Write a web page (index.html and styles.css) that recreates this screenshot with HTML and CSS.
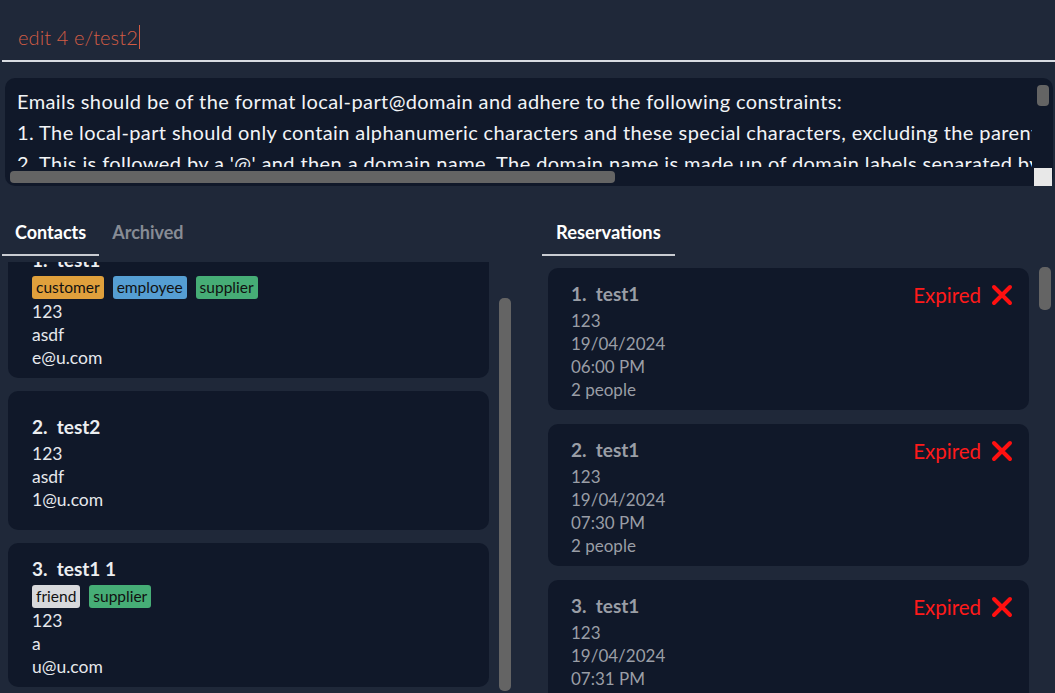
FILE: index.html
```html
<!DOCTYPE html>
<html>
<head>
<meta charset="utf-8">
<link rel="stylesheet" href="styles.css">
</head>
<body>
<div class="app">
  <div class="command">
    <span class="command-text">edit 4 e/test2</span><span class="caret"></span>
  </div>

  <div class="result">
    <div class="result-text">
      <div class="result-line">Emails should be of the format local-part@domain and adhere to the following constraints:</div>
      <div class="result-line">1. The local-part should only contain alphanumeric characters and these special characters, excluding the parentheses, (+_.-). The local-part may not start or end with any special characters.</div>
      <div class="result-line">2. This is followed by a '@' and then a domain name. The domain name is made up of domain labels separated by periods.</div>
    </div>
    <div class="result-hbar"><div class="hthumb"></div><div class="corner"></div></div>
    <div class="vthumb"></div>
  </div>

  <div class="panels">
    <section class="column left">
      <div class="tabs">
        <div class="tab active">Contacts</div>
        <div class="tab">Archived</div>
      </div>
      <div class="viewport">
        <div class="list contacts">
          <div class="card">
            <div class="title">1.&nbsp;&nbsp;test1</div>
            <div class="tags">
              <span class="tag orange">customer</span>
              <span class="tag blue">employee</span>
              <span class="tag green">supplier</span>
            </div>
            <div class="line">123</div>
            <div class="line">asdf</div>
            <div class="line">e@u.com</div>
          </div>
          <div class="card card-notags">
            <div class="title">2.&nbsp;&nbsp;test2</div>
            <div class="line">123</div>
            <div class="line">asdf</div>
            <div class="line">1@u.com</div>
          </div>
          <div class="card">
            <div class="title">3.&nbsp;&nbsp;test1 1</div>
            <div class="tags">
              <span class="tag grey">friend</span>
              <span class="tag green">supplier</span>
            </div>
            <div class="line">123</div>
            <div class="line">a</div>
            <div class="line">u@u.com</div>
          </div>
        </div>
        <div class="scroll left-scroll"><div class="thumb"></div></div>
      </div>
    </section>

    <section class="column right">
      <div class="tabs">
        <div class="tab active res-tab">Reservations</div>
      </div>
      <div class="viewport">
        <div class="list reservations">
          <div class="card rcard">
            <div class="rhead">
              <div class="title">1.&nbsp;&nbsp;test1</div>
              <div class="status">Expired <svg class="xicon" viewBox="0 0 22 22"><path d="M3 3 L19 19 M19 3 L3 19"/></svg></div>
            </div>
            <div class="line">123</div>
            <div class="line">19/04/2024</div>
            <div class="line">06:00 PM</div>
            <div class="line">2 people</div>
          </div>
          <div class="card rcard">
            <div class="rhead">
              <div class="title">2.&nbsp;&nbsp;test1</div>
              <div class="status">Expired <svg class="xicon" viewBox="0 0 22 22"><path d="M3 3 L19 19 M19 3 L3 19"/></svg></div>
            </div>
            <div class="line">123</div>
            <div class="line">19/04/2024</div>
            <div class="line">07:30 PM</div>
            <div class="line">2 people</div>
          </div>
          <div class="card rcard">
            <div class="rhead">
              <div class="title">3.&nbsp;&nbsp;test1</div>
              <div class="status">Expired <svg class="xicon" viewBox="0 0 22 22"><path d="M3 3 L19 19 M19 3 L3 19"/></svg></div>
            </div>
            <div class="line">123</div>
            <div class="line">19/04/2024</div>
            <div class="line">07:31 PM</div>
            <div class="line">2 people</div>
          </div>
        </div>
        <div class="scroll right-scroll"><div class="thumb"></div></div>
      </div>
    </section>
  </div>
</div>
</body>
</html>
```

FILE: styles.css
```css
* { box-sizing: border-box; }

html, body {
  margin: 0;
  padding: 0;
  background: #1f2839;
  width: 1055px;
  height: 693px;
  overflow: hidden;
  font-family: Lato, "Open Sans", sans-serif;
}

.app {
  display: flex;
  flex-direction: column;
  height: 693px;
}

/* command box */
.command {
  height: 62px;
  margin-left: 2px;
  border-bottom: 2px solid #d9dce2;
  padding-left: 16px;
  display: flex;
  align-items: center;
  padding-top: 14px;
}
.command-text {
  color: #d25c44;
  font-size: 20px;
  font-weight: 300;
  letter-spacing: 0.1px;
}
.caret {
  display: inline-block;
  width: 1px;
  height: 24px;
  background: #d25c44;
  margin-left: 1px;
}

/* result box */
.result {
  position: relative;
  margin: 16px 2px 0 5px;
  height: 108px;
  background: #101829;
  border-radius: 10px;
}
.result-text {
  height: 89px;
  overflow: hidden;
  padding: 8px 0 0 12px;
  margin-right: 21px;
}
.result-line {
  color: #f2f4f7;
  font-size: 20px;
  letter-spacing: 0.4px;
  line-height: 31px;
  white-space: nowrap;
  font-weight: 400;
}
.result-hbar {
  display: flex;
  align-items: center;
  height: 19px;
  padding-left: 5px;
}
.hthumb {
  width: 605px;
  height: 12px;
  background: #646464;
  border-radius: 4px;
}
.corner {
  margin-left: auto;
  margin-right: 1px;
  width: 18px;
  height: 18px;
  background: #e8e8e8;
}
.vthumb {
  position: absolute;
  right: 4px;
  top: 7px;
  width: 12px;
  height: 21px;
  background: #646464;
  border-radius: 4px;
}

/* panels */
.panels {
  flex: 1;
  display: grid;
  grid-template-columns: 530px 525px;
  min-height: 0;
}
.column {
  display: flex;
  flex-direction: column;
  min-height: 0;
}
.tabs {
  height: 76px;
  display: flex;
  align-items: flex-end;
  padding-bottom: 6px;
}
.left .tabs { padding-left: 2px; }
.right .tabs { padding-left: 12px; }
.tab {
  font-size: 18px;
  font-weight: 700;
  color: #878c95;
  padding: 0 13px 11px 13px;
  border-bottom: 2px solid transparent;
}
.tab.active {
  color: #ffffff;
  border-bottom-color: #c9ccd2;
}
.res-tab { padding: 0 14px 11px 14px; font-size: 18.3px; }

.viewport {
  flex: 1;
  display: flex;
  overflow: hidden;
  min-height: 0;
}
.list {
  width: 481px;
  display: flex;
  flex-direction: column;
  gap: 13px;
}
.contacts {
  margin-left: 8px;
  margin-top: -28px;
}
.reservations {
  margin-left: 18px;
  margin-top: 6px;
  gap: 14px;
}

.card {
  background: #101829;
  border-radius: 10px;
  padding: 15px 24px 9px 24px;
  flex-shrink: 0;
}
.card-notags {
  padding-top: 25px;
  padding-bottom: 19px;
}
.card-notags .title { margin-bottom: 4px; }

.title {
  font-size: 19px;
  font-weight: 700;
  line-height: 22px;
  color: #eceef1;
}
.line {
  font-size: 17.5px;
  line-height: 23px;
  color: #e6e8ec;
}

.tags {
  display: flex;
  gap: 9px;
  margin: 5px 0 1px 0;
}
.tag {
  height: 23px;
  line-height: 23px;
  font-size: 15.5px;
  padding: 0 4px;
  border-radius: 3px;
  color: #111;
}
.orange { background: #e0a03c; }
.blue { background: #559ed3; }
.green { background: #46ad76; }
.grey { background: #d8d9dc; }

/* reservation cards */
.rcard {
  padding: 15px 16px 9px 23px;
}
.rhead {
  display: flex;
  align-items: center;
  justify-content: space-between;
  height: 22px;
  margin-bottom: 4px;
}
.rcard .title { color: #9a9ea6; }
.rcard .line { color: #9a9ea6; font-size: 17px; }
.status {
  display: flex;
  align-items: center;
  gap: 10px;
  color: #ff1a1a;
  font-size: 20.5px;
  margin-top: 2px;
}
.xicon {
  width: 22px;
  height: 22px;
}
.xicon path {
  stroke: #ff1010;
  stroke-width: 4;
  stroke-linecap: round;
  fill: none;
}

/* scrollbars */
.scroll {
  width: 12px;
  margin-left: 10px;
  flex-shrink: 0;
}
.scroll .thumb {
  width: 12px;
  background: #646464;
  border-radius: 5px;
}
.left-scroll { padding-top: 36px; }
.left-scroll .thumb { height: 393px; }
.right-scroll { padding-top: 5px; }
.right-scroll .thumb { height: 43px; }
```
